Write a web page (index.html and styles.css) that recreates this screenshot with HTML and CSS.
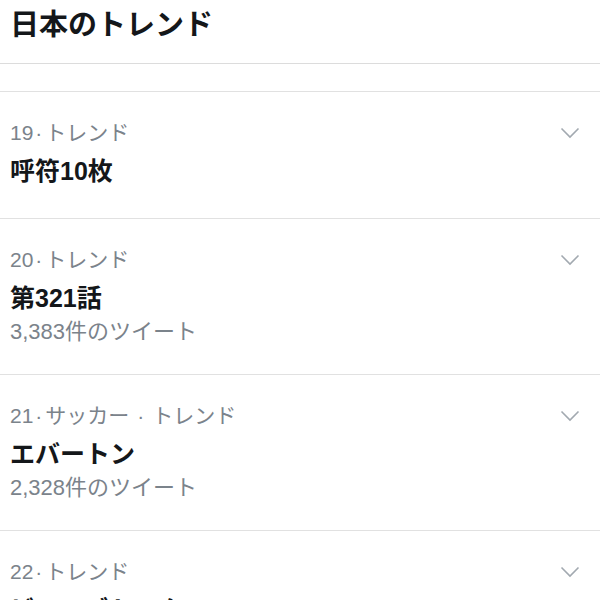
FILE: index.html
```html
<!DOCTYPE html>
<html lang="ja">
<head>
  <meta charset="UTF-8" />
  <meta name="viewport" content="width=device-width, initial-scale=1" />
  <title>日本のトレンド</title>
  <link rel="stylesheet" href="styles.css">
</head>
<body>
  <div class="trends" role="main">
    <h1 class="trends-title">日本のトレンド</h1>
    <div class="trends-gap"></div>

    <div class="trend">
      <div class="trend-body">
        <div class="trend-meta">19<span class="dot">·</span>トレンド</div>
        <div class="trend-name">呼符10枚</div>
      </div>
      <svg class="chevron" viewBox="0 0 20 12" aria-hidden="true"><path d="M1.5 1.5 L10 10 L18.5 1.5" /></svg>
    </div>

    <div class="trend">
      <div class="trend-body">
        <div class="trend-meta">20<span class="dot">·</span>トレンド</div>
        <div class="trend-name">第321話</div>
        <div class="trend-count">3,383件のツイート</div>
      </div>
      <svg class="chevron" viewBox="0 0 20 12" aria-hidden="true"><path d="M1.5 1.5 L10 10 L18.5 1.5" /></svg>
    </div>

    <div class="trend">
      <div class="trend-body">
        <div class="trend-meta">21<span class="dot">·</span>サッカー<span class="dot wide">·</span>トレンド</div>
        <div class="trend-name">エバートン</div>
        <div class="trend-count">2,328件のツイート</div>
      </div>
      <svg class="chevron" viewBox="0 0 20 12" aria-hidden="true"><path d="M1.5 1.5 L10 10 L18.5 1.5" /></svg>
    </div>

    <div class="trend">
      <div class="trend-body">
        <div class="trend-meta">22<span class="dot">·</span>トレンド</div>
        <div class="trend-name">ビーンズトーク</div>
        <div class="trend-count">1,904件のツイート</div>
      </div>
      <svg class="chevron" viewBox="0 0 20 12" aria-hidden="true"><path d="M1.5 1.5 L10 10 L18.5 1.5" /></svg>
    </div>
  </div>
</body>
</html>
```

FILE: styles.css
```css
body {
  margin: 0;
  background: #fff;
  font-family: "Liberation Sans", "Noto Sans CJK JP", sans-serif;
  color: #14171a;
  overflow: hidden;
}
.trends {
  width: 600px;
}
.trends-title {
  margin: 0;
  padding: 1px 10px 14px;
  font-size: 29px;
  line-height: 48px;
  font-weight: 700;
  border-bottom: 1px solid #dcdcdc;
}
.trends-gap {
  height: 27px;
  border-bottom: 1px solid #e1e1e1;
}
.trend {
  display: flex;
  justify-content: space-between;
  align-items: flex-start;
  padding: 22px 20px 28px 10px;
  border-bottom: 1px solid #e1e1e1;
}
.trend-meta {
  font-size: 21px;
  line-height: 38px;
  color: #7b838b;
}
.dot {
  margin: 0 3px 0 2px;
}
.dot.wide {
  margin: 0 8px;
}
.trend-name {
  font-size: 25px;
  line-height: 38px;
  font-weight: 700;
}
.trend-count {
  font-size: 22px;
  line-height: 29px;
  color: #7b838b;
}
.chevron {
  width: 20px;
  height: 12px;
  margin-top: 13px;
  fill: none;
  stroke: #a2a9b0;
  stroke-width: 1.6;
}
```
